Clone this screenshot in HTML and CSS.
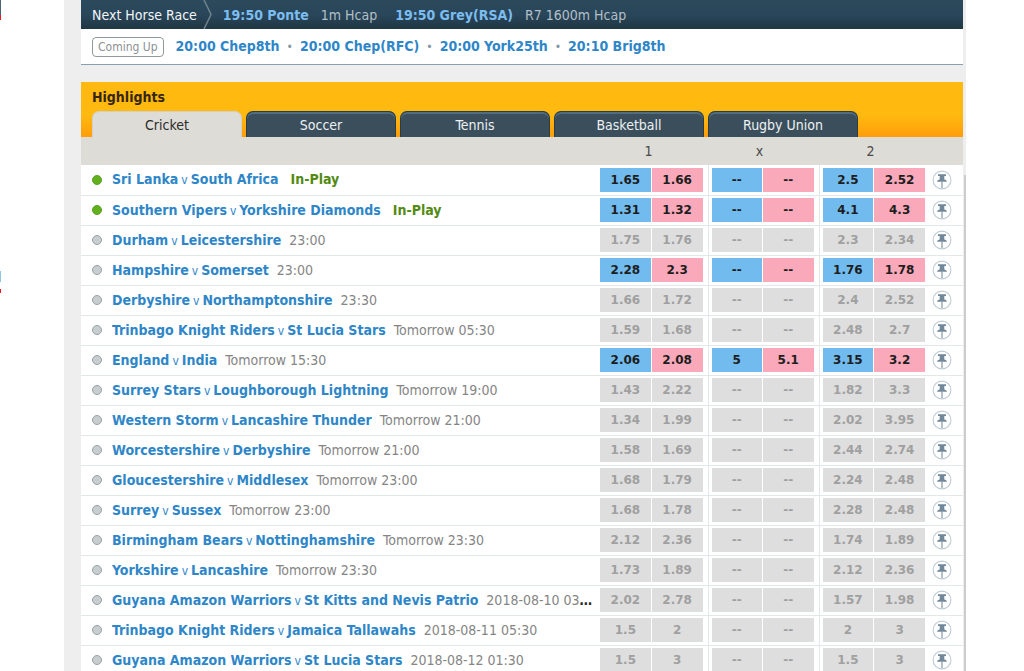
FILE: index.html
```
<!DOCTYPE html>
<html lang="en">
<head>
<meta charset="utf-8">
<title>Highlights</title>
<link rel="stylesheet" href="styles.css">
</head>
<body>
<svg class="sprite" aria-hidden="true">
  <symbol id="pin" viewBox="0 0 20 20">
    <circle cx="10" cy="10" r="8.900" fill="#fff" stroke="#bdcbd4" stroke-width="1.100"/>
    <path d="M6 4.200h8v1.800h-1.700v3.400c1.500 .4 2.400 1.100 2.700 2.300H5c.3-1.200 1.200-1.900 2.700-2.300V6H6z" fill="#71889a"/>
    <path d="M9.400 11.500h1.200v6.500H9.400z" fill="#8497a5"/>
  </symbol>
</svg>
<div class="edge"></div>
<main class="panel">
  <nav class="next-race" aria-label="Next horse race">
    <span class="next-title">Next Horse Race</span>
    <svg class="chevron" viewBox="0 0 10 29" aria-hidden="true"><path d="M1 0l7 14.500L1 29" fill="none" stroke="#71838e" stroke-width="1.500"/></svg>
    <span class="race"><a href="#">19:50 Ponte</a><span>1m Hcap</span></span>
    <span class="race"><a href="#">19:50 Grey(RSA)</a><span>R7 1600m Hcap</span></span>
  </nav>
  <nav class="coming" aria-label="Coming up">
    <span class="badge">Coming Up</span>
    <ul class="coming-list">
      <li><a href="#">20:00 Chep8th</a></li>
      <li><a href="#">20:00 Chep(RFC)</a></li>
      <li><a href="#">20:00 York25th</a></li>
      <li><a href="#">20:10 Brig8th</a></li>
    </ul>
  </nav>
  <section class="highlights">
    <header class="highlights-head">
      <h2>Highlights</h2>
      <div class="tabs" role="tablist">
        <button class="tab active" role="tab" aria-selected="true">Cricket</button>
        <button class="tab" role="tab" aria-selected="false">Soccer</button>
        <button class="tab" role="tab" aria-selected="false">Tennis</button>
        <button class="tab" role="tab" aria-selected="false">Basketball</button>
        <button class="tab" role="tab" aria-selected="false">Rugby Union</button>
      </div>
    </header>
    <table class="markets">
      <colgroup><col><col class="col-odds"><col class="col-odds"><col class="col-odds"><col class="col-pin"></colgroup>
      <thead><tr><td></td><th scope="col">1</th><th scope="col">x</th><th scope="col">2</th><td></td></tr></thead>
      <tbody id="rows"></tbody>
    </table>
  </section>
</main>
<script src="markets.js"></script>
</body>
</html>
```
FILE: markets.js
```
const markets = [
  ["Sri Lanka", "South Africa", "In-Play", "open", "1.65 1.66 -- -- 2.5 2.52"],
  ["Southern Vipers", "Yorkshire Diamonds", "In-Play", "open", "1.31 1.32 -- -- 4.1 4.3"],
  ["Durham", "Leicestershire", "23:00", "", "1.75 1.76 -- -- 2.3 2.34"],
  ["Hampshire", "Somerset", "23:00", "open", "2.28 2.3 -- -- 1.76 1.78"],
  ["Derbyshire", "Northamptonshire", "23:30", "", "1.66 1.72 -- -- 2.4 2.52"],
  ["Trinbago Knight Riders", "St Lucia Stars", "Tomorrow 05:30", "", "1.59 1.68 -- -- 2.48 2.7"],
  ["England", "India", "Tomorrow 15:30", "open", "2.06 2.08 5 5.1 3.15 3.2"],
  ["Surrey Stars", "Loughborough Lightning", "Tomorrow 19:00", "", "1.43 2.22 -- -- 1.82 3.3"],
  ["Western Storm", "Lancashire Thunder", "Tomorrow 21:00", "", "1.34 1.99 -- -- 2.02 3.95"],
  ["Worcestershire", "Derbyshire", "Tomorrow 21:00", "", "1.58 1.69 -- -- 2.44 2.74"],
  ["Gloucestershire", "Middlesex", "Tomorrow 23:00", "", "1.68 1.79 -- -- 2.24 2.48"],
  ["Surrey", "Sussex", "Tomorrow 23:00", "", "1.68 1.78 -- -- 2.28 2.48"],
  ["Birmingham Bears", "Nottinghamshire", "Tomorrow 23:30", "", "2.12 2.36 -- -- 1.74 1.89"],
  ["Yorkshire", "Lancashire", "Tomorrow 23:30", "", "1.73 1.89 -- -- 2.12 2.36"],
  ["Guyana Amazon Warriors", "St Kitts and Nevis Patrio", "2018-08-10 03:30", "", "2.02 2.78 -- -- 1.57 1.98"],
  ["Trinbago Knight Riders", "Jamaica Tallawahs", "2018-08-11 05:30", "", "1.5 2 -- -- 2 3"],
  ["Guyana Amazon Warriors", "St Lucia Stars", "2018-08-12 01:30", "", "1.5 3 -- -- 1.5 3"]
];

document.getElementById("rows").innerHTML = markets.map(([home, away, time, state, odds]) => {
  const live = time === "In-Play" ? " live" : "";
  const p = odds.split(" ");
  const pair = i => `<td class="odds"><div class="prices"><button class="price back">${p[i]}</button><button class="price lay">${p[i + 1]}</button></div></td>`;
  return `<tr class="${state}">
    <td><div class="event"><i class="dot${live}"></i><div class="name"><a href="#">${home}<span class="versus">v</span>${away}</a><span class="time${live}">${time}</span></div></div></td>
    ${pair(0)}${pair(2)}${pair(4)}
    <td><button class="pin" aria-label="Pin ${home} v ${away}"><svg><use href="#pin"/></svg></button></td>
  </tr>`;
}).join("");
```
FILE: styles.css
```
* { box-sizing: border-box; }
body {
  margin: 0;
  display: flex;
  background: #fff;
  color: #2b2b2b;
  font: 14px/18px "DejaVu Sans Condensed", "DejaVu Sans", sans-serif;
}
a { color: #2e86c8; font-weight: bold; text-decoration: none; }
button { margin: 0; padding: 0; border: 0; background: none; font: inherit; cursor: pointer; }
.sprite { position: absolute; width: 0; height: 0; }

.edge {
  flex: none;
  width: 1px;
  height: 293px;
  margin-right: 63px;
  background: linear-gradient(#4c6476 15px, #f01820 15px 20px, #fff 20px 271px, #8cc8e0 271px 282px, #fff 282px 289px, #f01820 289px);
}
.panel {
  flex: 1;
  min-width: 0;
  margin-right: 58px;
  padding: 0 3px 0 17px;
  background: linear-gradient(#cccccf, #cccccf) right 175px / 2px 100% no-repeat, #eee;
}

.next-race {
  display: flex;
  align-items: center;
  height: 29px;
  padding-left: 11px;
  background: linear-gradient(#2b4a5b, #29465b 50%, #203743);
  color: #b4bfc6;
}
.next-title { color: #f3f5f6; }
.chevron { width: 10px; height: 29px; margin: 0 10px 0 6px; }
.race { display: flex; gap: 12px; margin-right: 18px; }
.race a { color: #7cbdf0; }

.coming {
  display: flex;
  align-items: center;
  gap: 12px;
  height: 36px;
  padding-left: 11px;
  background: #fff;
  border-bottom: 1px solid #8b9db0;
}
.badge {
  padding: 0 5px;
  border: 1px solid #8f999f;
  border-radius: 4px;
  color: #8b9195;
  font-size: 12px;
}
.coming-list { display: flex; margin: 0; padding: 0; list-style: none; }
.coming-list li + li::before { content: "•"; margin: 0 7px; color: #8499a8; font-size: 12px; }

.highlights { margin-top: 17px; }
.highlights-head {
  padding: 6px 11px 0;
  background: linear-gradient(#ffb90f 60%, #ff9d0a);
}
.highlights-head h2 { margin: 0; font-size: 14px; line-height: 18px; color: #35270f; }
.tabs { display: flex; gap: 4px; margin-top: 5px; }
.tab {
  width: 150px;
  height: 26px;
  border: solid #2a3e4a;
  border-width: 1px 1px 0;
  border-radius: 7px 7px 0 0;
  background: #3a4f5b;
  box-shadow: inset 0 2px #526c80;
  color: #eef1f3;
}
.tab.active { background: #dedcd7; border-color: #d2cfc8; box-shadow: none; color: #2b2b2b; }

.markets { width: 100%; table-layout: fixed; border-collapse: collapse; background: #fff; }
.col-odds { width: 111px; }
.col-pin { width: 33px; }
.markets td, .markets th { padding: 0; }
.markets thead { background: #dedcd7; }
.markets th { height: 28px; padding-right: 8px; font-weight: normal; color: #4a4a4a; }
.markets tbody tr { height: 30px; border-bottom: 1px solid #e2e8ea; }

.event { display: flex; align-items: center; gap: 10px; padding: 0 2px 0 11px; }
.dot { flex: none; width: 10px; height: 10px; border: 1px solid #98a1a4; border-radius: 50%; background: #c8cdcf; }
.dot.live { border-color: #5ba023; background: #62b01e; }
.name { min-width: 0; overflow: hidden; white-space: nowrap; text-overflow: ellipsis; font-weight: bold; }
.versus { margin: 0 3px; font-weight: normal; font-size: 12px; }
.time { margin-left: 8px; font-weight: normal; color: #858585; }
.time.live { margin-left: 12px; font-weight: bold; color: #538a14; }

.odds + .odds { border-left: 1px solid #e2e8ea; }
.prices { display: flex; gap: 1px; height: 24px; padding: 0 5px 0 3px; }
.price { flex: 1; background: #dedede; color: #a0a0a0; font: bold 12px/24px "DejaVu Sans", sans-serif; }
.open .price { color: #1d1d1d; }
.open .back { background: #72bbef; }
.open .lay { background: #faa9ba; }
.pin { display: block; width: 20px; height: 20px; margin-left: 2px; }
.pin svg { display: block; width: 20px; height: 20px; }
```
